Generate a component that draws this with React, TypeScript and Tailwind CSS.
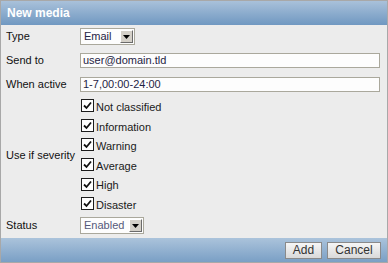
const font = { fontFamily: '"Liberation Sans", Arial, sans-serif' };

function Select({ value, width, muted }: { value: string; width: string; muted?: boolean }) {
  return (
    <div className={`flex h-[17px] items-center border border-[#aaa89c] bg-[#fdfdfd] pl-[3px] pr-[1px] ${width}`}>
      <span className={`flex-1 text-[11px] leading-none ${muted ? "text-[#55597a]" : "text-[#1f2444]"}`}>{value}</span>
      <span className="flex h-[13px] w-[13px] items-center justify-center border border-t-white border-l-white border-r-[#6b6b6b] border-b-[#6b6b6b] bg-[#d4d0c8]">
        <svg width="7" height="4" viewBox="0 0 7 4">
          <path d="M0 0h7L3.5 4z" fill="#000" />
        </svg>
      </span>
    </div>
  );
}

function Check({ label }: { label: string }) {
  return (
    <div className="flex h-[19.6px] items-center">
      <span className="ml-[1px] flex h-[13px] w-[13px] items-center justify-center border border-[#1c1c1c] bg-white">
        <svg width="9" height="9" viewBox="0 0 9 9">
          <path d="M1 4.5l2.5 2.5L8 1.5" stroke="#111" strokeWidth="1.8" fill="none" />
        </svg>
      </span>
      <span className="ml-[2px] mt-[3px] text-[11px] text-[#1a1a1a]">{label}</span>
    </div>
  );
}

export default function App() {
  const severities = ["Not classified", "Information", "Warning", "Average", "High", "Disaster"];
  return (
    <div style={font} className="flex h-[263px] w-[388px] flex-col border border-[#a8a8a8] bg-[#ececec] text-[11px] text-[#111]">
      <div className="flex h-[24px] items-center bg-gradient-to-b from-[#a9c1da] to-[#7098c1] px-[6px]">
        <span className="text-[12px] font-bold text-white">New media</span>
      </div>

      <div className="flex flex-1 flex-col pl-[5px] pr-[7px]">
        <div className="flex h-[23px] items-center">
          <span className="w-[74px]">Type</span>
          <Select value="Email" width="w-[55px]" />
        </div>
        <div className="flex h-[24px] items-center">
          <span className="w-[74px]">Send to</span>
          <div className="flex h-[15px] flex-1 items-center border border-[#aaa89c] bg-[#fdfdfd] pl-[2px] text-[#1f2444]">user@domain.tld</div>
        </div>
        <div className="flex h-[24px] items-center">
          <span className="w-[74px]">When active</span>
          <div className="flex h-[15px] flex-1 items-center border border-[#aaa89c] bg-[#fdfdfd] pl-[2px] text-[#1f2444]">1-7,00:00-24:00</div>
        </div>
        <div className="flex items-center">
          <span className="w-[74px]">Use if severity</span>
          <div className="flex flex-col">
            {severities.map((s) => (
              <Check key={s} label={s} />
            ))}
          </div>
        </div>
        <div className="flex h-[24px] items-center">
          <span className="w-[74px]">Status</span>
          <Select value="Enabled" width="w-[64px]" muted />
        </div>
      </div>

      <div className="flex h-[24px] items-center justify-end gap-[5px] bg-gradient-to-b from-[#abc3db] to-[#7a9fc5] pr-[6px]">
        <button className="h-[17px] w-[37px] border border-[#8a8a8a] bg-gradient-to-b from-[#f6f6f6] to-[#d9d9d9] text-[12px] leading-none text-[#333]">Add</button>
        <button className="h-[17px] w-[54px] border border-[#8a8a8a] bg-gradient-to-b from-[#f6f6f6] to-[#d9d9d9] text-[12px] leading-none text-[#333]">Cancel</button>
      </div>
    </div>
  );
}
